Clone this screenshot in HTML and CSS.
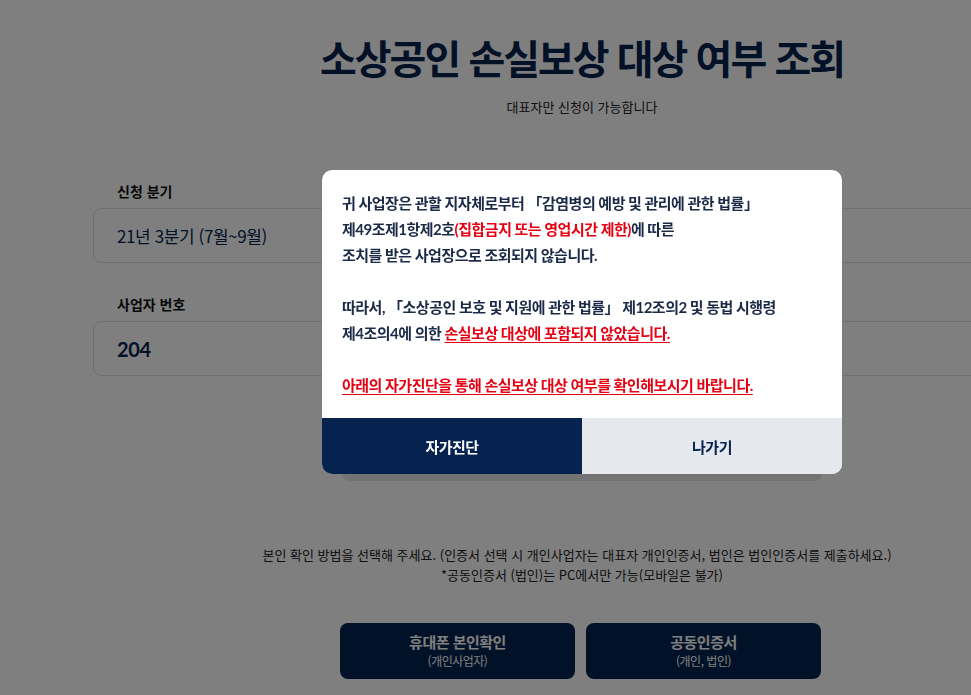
FILE: index.html
```html
<!DOCTYPE html>
<html lang="ko">
<head>
    <meta charset="UTF-8">
    <meta name="viewport" content="width=device-width, initial-scale=1.0">
    <title>소상공인 손실보상 대상 여부 조회</title>
    <link rel="stylesheet" href="styles.css">
</head>
<body>
    <div class="page">
        <div class="container">
            <h1 class="title">소상공인 손실보상 대상 여부 조회</h1>
            <p class="sub">대표자만 신청이 가능합니다</p>

            <div class="form">
                <label class="label">신청 분기</label>
                <div class="field">21년 3분기 (7월~9월)</div>

                <label class="label">사업자 번호</label>
                <div class="field num">204</div>

                <button class="check-btn">조회하기</button>
            </div>

            <p class="notice">
                <span class="first">본인 확인 방법을 선택해 주세요. (인증서 선택 시 개인사업자는 대표자 개인인증서, 법인은 법인인증서를 제출하세요.)</span><br>
                *공동인증서 (법인)는 PC에서만 가능(모바일은 불가)
            </p>

            <div class="auth-btns">
                <button class="auth-btn">휴대폰 본인확인<span>(개인사업자)</span></button>
                <button class="auth-btn">공동인증서<span>(개인, 법인)</span></button>
            </div>
        </div>

        <div class="dim"></div>

        <div class="modal">
            <div class="modal-body">
                <p>귀 사업장은 관할 지자체로부터 「감염병의 예방 및 관리에 관한 법률」<br>
                제49조제1항제2호<span class="red">(집합금지 또는 영업시간 제한)</span>에 따른<br>
                조치를 받은 사업장으로 조회되지 않습니다.</p>
                <br>
                <p>따라서, 「소상공인 보호 및 지원에 관한 법률」 제12조의2 및 동법 시행령<br>
                제4조의4에 의한 <u class="red">손실보상 대상에 포함되지 않았습니다.</u></p>
                <br>
                <p><u class="red">아래의 자가진단을 통해 손실보상 대상 여부를 확인해보시기 바랍니다.</u></p>
            </div>
            <div class="modal-btns">
                <button class="btn-primary">자가진단</button>
                <button class="btn-cancel">나가기</button>
            </div>
        </div>
    </div>
</body>
</html>
```

FILE: styles.css
```css
* {
    margin: 0;
    padding: 0;
    box-sizing: border-box;
}

html, body {
    overflow: hidden;
}

body {
    background: #fff;
    font-family: 'Noto Sans CJK KR', sans-serif;
    color: #111;
}

.page {
    position: relative;
    min-width: 1164px;
    min-height: 695px;
}

.container {
    width: 978px;
    margin: 0 auto;
    padding-top: 29px;
    text-align: center;
}

.title {
    font-size: 40px;
    line-height: 56px;
    font-weight: 700;
    color: #06224f;
    letter-spacing: -2px;
}

.sub {
    margin-top: 12px;
    font-size: 13px;
    line-height: 20px;
    color: #222;
}

.form {
    margin-top: 64px;
    text-align: left;
}

.label {
    display: block;
    padding-left: 24px;
    font-size: 14px;
    line-height: 20px;
    font-weight: 700;
    color: #111;
    margin-bottom: 7px;
}

.field {
    height: 55px;
    border: 1px solid #dcdfe8;
    border-radius: 8px;
    padding: 0 23px;
    display: flex;
    align-items: center;
    font-size: 17px;
    color: #06224f;
    margin-bottom: 31px;
    letter-spacing: -0.4px;
}

.field.num {
    font-family: Lato, 'Noto Sans CJK KR', sans-serif;
    font-weight: 700;
    font-size: 20px;
    margin-bottom: 49px;
}

.check-btn {
    display: block;
    width: 480px;
    height: 56px;
    margin: 0 auto;
    border: none;
    border-radius: 8px;
    background: #e6e6e6;
    font-family: inherit;
    font-size: 16px;
    color: #666;
}

.notice {
    margin-top: 64px;
    font-size: 13px;
    line-height: 20px;
    color: #222;
    letter-spacing: 0;
}

.notice .first {
    margin-right: 10px;
}

.auth-btns {
    margin-top: 38px;
    display: flex;
    justify-content: center;
    gap: 11px;
    padding-right: 3px;
}

.auth-btn {
    width: 235px;
    height: 56px;
    border: none;
    border-radius: 8px;
    background: #03224f;
    color: #fff;
    font-family: inherit;
    font-size: 15px;
    font-weight: 700;
    line-height: 20px;
    letter-spacing: -0.5px;
    display: flex;
    flex-direction: column;
    align-items: center;
    justify-content: center;
}

.auth-btn span {
    font-size: 12px;
    font-weight: 400;
    line-height: 18px;
}

.dim {
    position: fixed;
    top: 0;
    left: 0;
    right: 0;
    bottom: 0;
    background: rgba(0, 0, 0, 0.5);
}

.modal {
    position: absolute;
    top: 170px;
    left: 50%;
    width: 520px;
    margin-left: -260px;
    background: #fff;
    border-radius: 10px;
    overflow: hidden;
}

.modal-body {
    padding: 20px;
    font-family: Lato, 'Noto Sans CJK KR', sans-serif;
    font-size: 15px;
    font-weight: 700;
    line-height: 26px;
    color: #1b2a47;
    letter-spacing: -0.5px;
}

.red {
    color: #e60012;
}

u.red {
    text-underline-offset: 3px;
}

.modal-btns {
    display: flex;
}

.modal-btns button {
    flex: 1;
    height: 56px;
    border: none;
    font-family: 'Noto Sans CJK KR', sans-serif;
    font-size: 15px;
    font-weight: 700;
    letter-spacing: -0.5px;
}

.btn-primary {
    background: #06224f;
    color: #fff;
}

.btn-cancel {
    background: #e5e9ed;
    color: #06224f;
}
```
